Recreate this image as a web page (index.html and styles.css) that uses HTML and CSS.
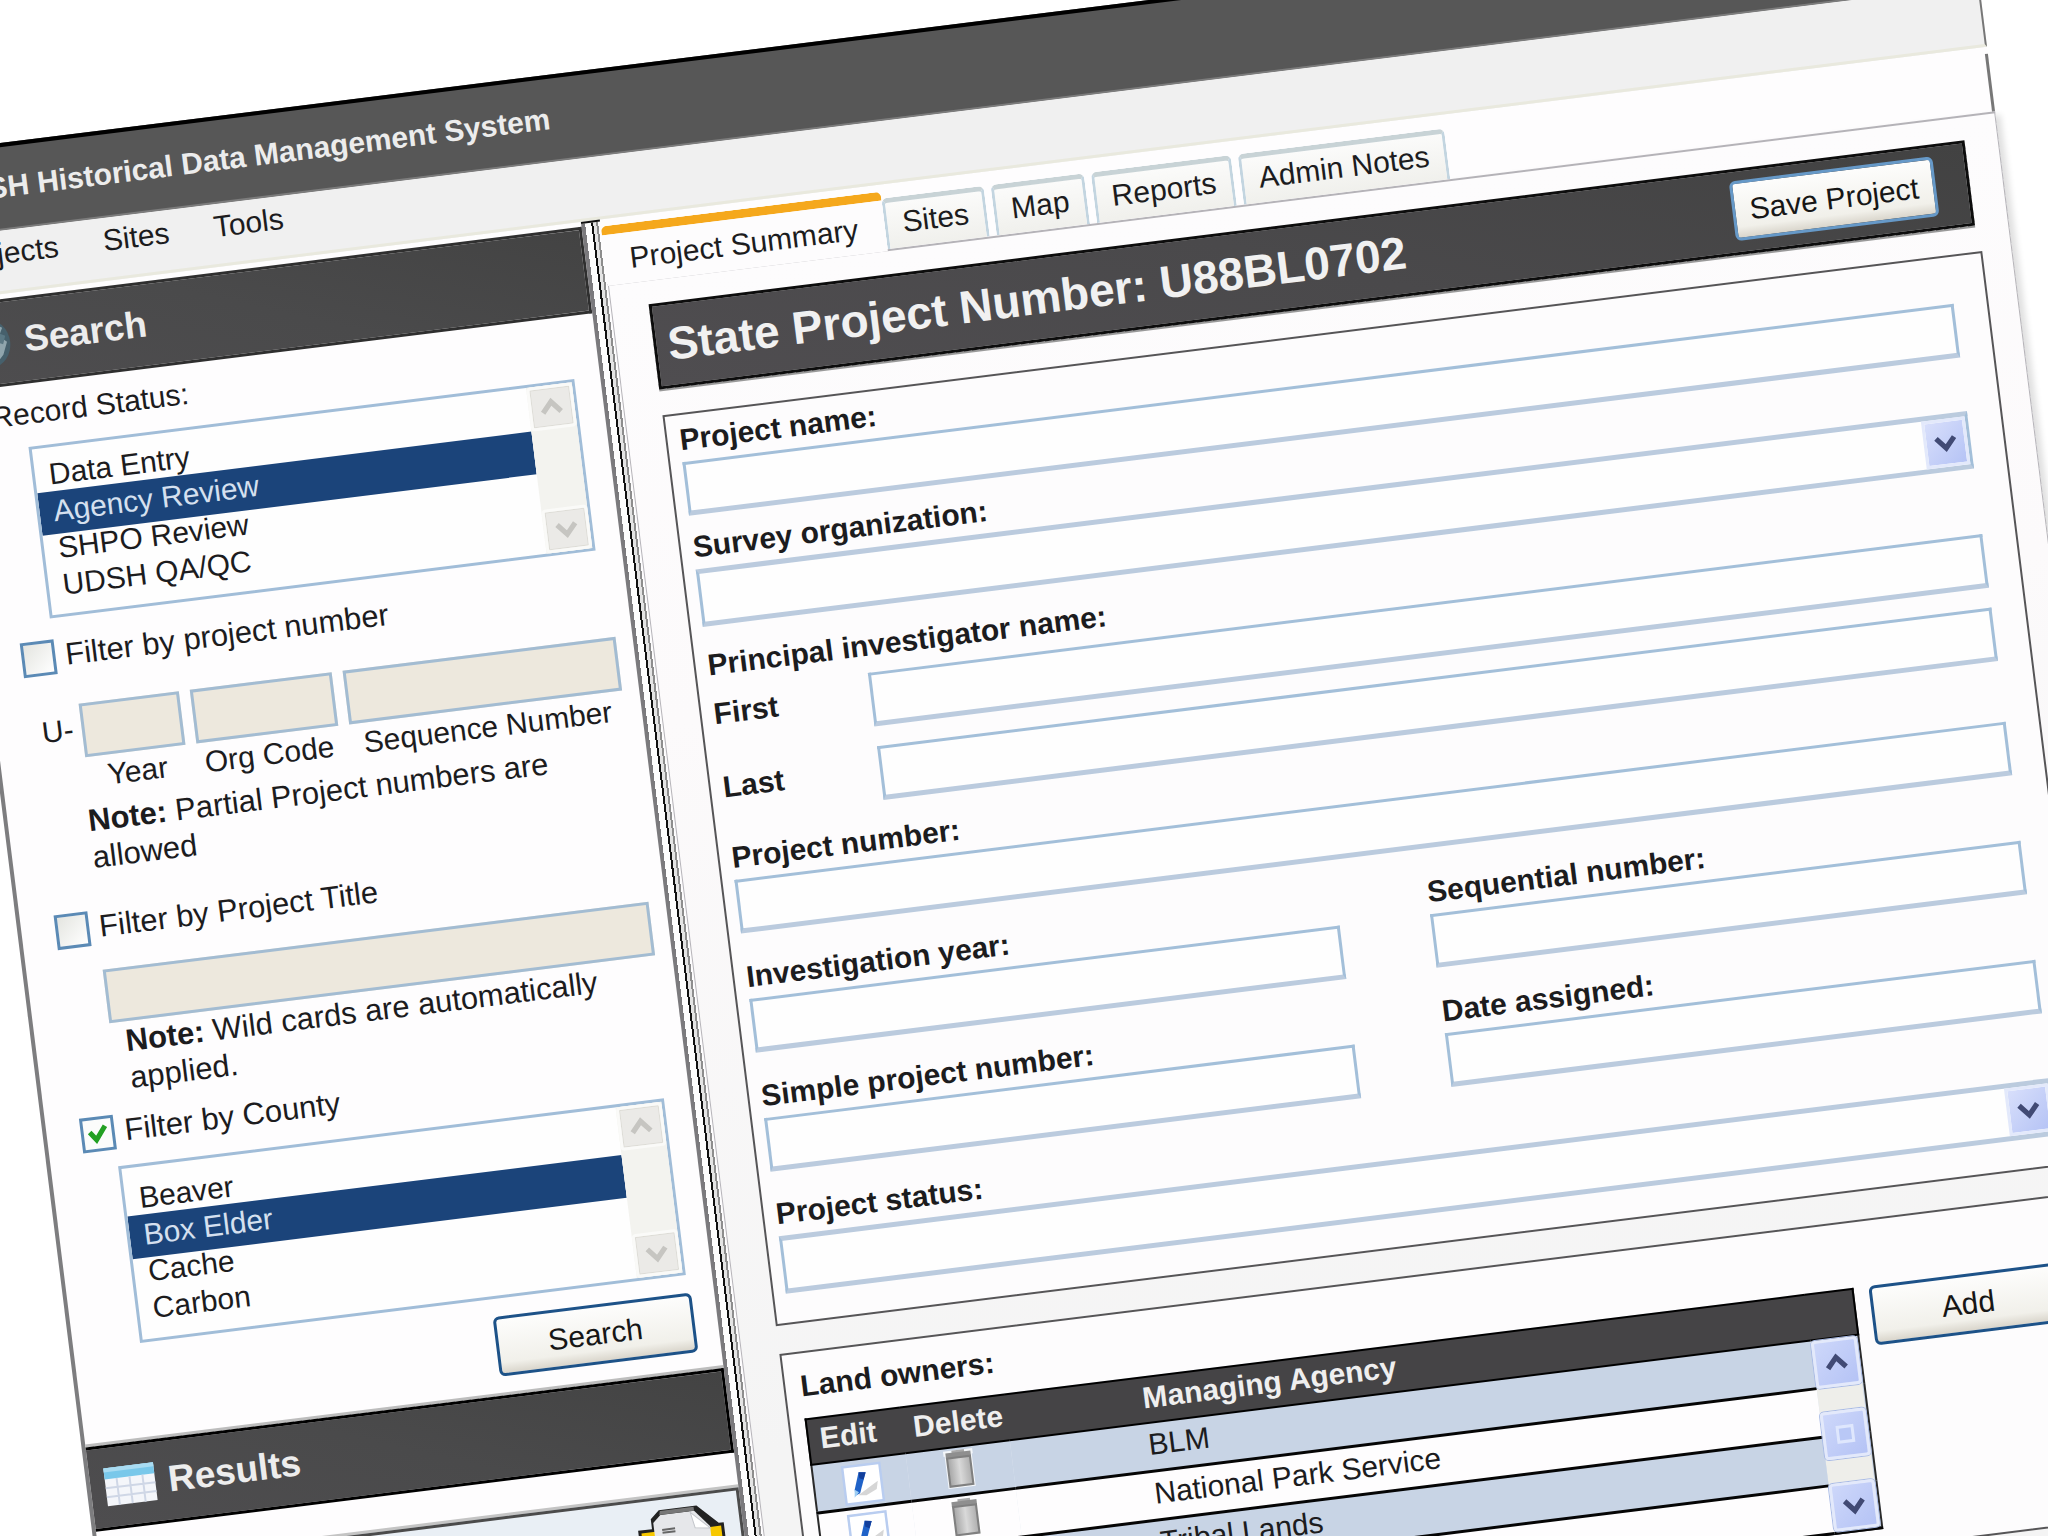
FILE: index.html
```html
<!DOCTYPE html>
<html lang="en">
<head>
<meta charset="utf-8">
<title>UDSH Historical Data Management System</title>
<link rel="stylesheet" href="styles.css">
</head>
<body>
<svg class="defs" aria-hidden="true">
  <symbol id="up" viewBox="0 0 20 20"><path d="M3 14 L10 6 L17 14" fill="none" stroke="currentColor" stroke-width="4"/></symbol>
  <symbol id="down" viewBox="0 0 20 20"><path d="M3 6 L10 14 L17 6" fill="none" stroke="currentColor" stroke-width="4"/></symbol>
  <linearGradient id="steel" x1="0" x2="1" y1="0" y2="0"><stop offset="0" stop-color="#a4a4a4"/><stop offset=".5" stop-color="#d9d9d9"/><stop offset="1" stop-color="#adadad"/></linearGradient>
  <symbol id="trash" viewBox="0 0 34 40"><path d="M3 2h28v5h-1v31H4V7H3z" fill="#fff" opacity=".8"/><path d="M11 2h12v3H11z" fill="#a9a9a9"/><path d="M5 4h24v5H5z" fill="#8f8f8f"/><path d="M6 9h22v27H6z" fill="url(#steel)" stroke="#808080" stroke-width="2"/></symbol>
  <symbol id="pencil" viewBox="0 0 40 40"><path d="M1 1h38v38H1z" fill="#fff" stroke="#b9cdf0" stroke-width="3"/><path d="M14 31 L35 19 L33 27 L22 32z" fill="#d6d6d6"/><path d="M17 8 L24 9 L16 29 L11 31 L11 25z" fill="#1f62c8"/><path d="M17 8 L24 9 L21 16 L17 14z" fill="#123f9c"/><path d="M11 25 L15 28 L10 33z" fill="#9ccdf3"/></symbol>
</svg>
<div class="window">
  <header class="titlebar">UDSH Historical Data Management System</header>
  <nav class="menubar">
    <a href="#projects">Projects</a>
    <a href="#sites">Sites</a>
    <a href="#tools">Tools</a>
  </nav>
  <div class="workspace">
    <aside class="sidebar">
      <h2 class="section-head">
        <svg class="globe" viewBox="0 0 44 48" aria-hidden="true"><ellipse cx="22" cy="24" rx="20" ry="23" fill="#46606c"/><path d="M24 3 l12 7 -4 8 7 6 -5 12 -8 8 -3 -12 -8 -6 4 -10z" fill="#8fa5ad"/><path d="M30 14l8 4-3 8-6-3z" fill="#5b7884"/></svg>
        Search
      </h2>
      <form class="search-form">
        <label for="status">Record Status:</label>
        <div class="listbox">
          <select id="status" size="4">
            <option>Data Entry</option>
            <option selected>Agency Review</option>
            <option>SHPO Review</option>
            <option>UDSH QA/QC</option>
          </select>
          <div class="scroll"><span><svg><use href="#up"/></svg></span><span><svg><use href="#down"/></svg></span></div>
        </div>
        <label class="check check-first"><input type="checkbox">Filter by project number</label>
        <div class="number-row">
          <span class="prefix">U-</span>
          <label class="part part-year"><input type="text" disabled>Year</label>
          <label class="part part-org"><input type="text" disabled>Org Code</label>
          <label class="part part-seq"><input type="text" disabled>Sequence Number</label>
        </div>
        <p class="note"><b>Note:</b> Partial Project numbers are allowed</p>
        <label class="check check-title"><input type="checkbox">Filter by Project Title</label>
        <input class="title-filter" type="text" aria-label="Project title" disabled>
        <p class="note note-title"><b>Note:</b> Wild cards are automatically applied.</p>
        <label class="check check-county"><input type="checkbox" checked>Filter by County</label>
        <div class="listbox listbox-tall">
          <select size="4" aria-label="County">
            <option>Beaver</option>
            <option selected>Box Elder</option>
            <option>Cache</option>
            <option>Carbon</option>
          </select>
          <div class="scroll"><span><svg><use href="#up"/></svg></span><span><svg><use href="#down"/></svg></span></div>
        </div>
        <button class="btn search-btn" type="button">Search</button>
      </form>
      <h2 class="section-head results-head">
        <svg class="grid-icon" viewBox="0 0 52 40" aria-hidden="true"><path d="M1 1h50v38H1z" fill="#f4f6fa"/><path d="M1 1h50v11H1z" fill="#79c8ea"/><path d="M1 1h50v4H1z" fill="#a9dcf2"/><path d="M13 12v27M26 12v27M39 12v27M1 21h50M1 30h50" stroke="#cfd7e6" stroke-width="2"/></svg>
        Results
      </h2>
      <div class="results-panel">
        <svg class="folder" viewBox="0 0 90 70" aria-hidden="true"><path d="M2 20h14V10l9-8h38l20 20h5v48H2z" fill="#222"/><path d="M5 23h14v47H5zM72 25h13v45H72z" fill="#f7c800"/><path d="M18 14l8-7h34l14 17v46H18z" fill="#e6e7ea"/><path d="M26 3h34v4H25z" fill="#777"/><path d="M56 8l3 16 15 2z" fill="#fff" stroke="#c3c5ca"/><path d="M26 22h13M26 25h13" stroke="#666" stroke-width="2"/></svg>
      </div>
    </aside>
    <div class="splitter"></div>
    <main class="detail">
      <nav class="tabs">
        <a class="tab tab-active" href="#summary">Project Summary</a>
        <a class="tab" href="#tab-sites">Sites</a>
        <a class="tab" href="#map">Map</a>
        <a class="tab" href="#reports">Reports</a>
        <a class="tab" href="#notes">Admin Notes</a>
      </nav>
      <div class="panel">
        <div class="project-bar">
          <h1>State Project Number: U88BL0702</h1>
          <button class="btn save-btn" type="button">Save Project</button>
        </div>
        <form class="group">
          <label for="pname">Project name:</label>
          <input id="pname" type="text">
          <label class="near" for="org">Survey organization:</label>
          <div class="combo"><select id="org"></select><span><svg><use href="#down"/></svg></span></div>
          <p class="legend">Principal investigator name:</p>
          <div class="names">
            <label for="first">First</label><input id="first" type="text">
            <label for="last">Last</label><input id="last" type="text">
          </div>
          <label class="after-names" for="pnum">Project number:</label>
          <input id="pnum" type="text">
          <div class="pair">
            <div><label for="year">Investigation year:</label><input id="year" type="text"></div>
            <div><label for="seq">Sequential number:</label><input id="seq" type="text"></div>
            <div><label for="simple">Simple project number:</label><input id="simple" type="text"></div>
            <div><label for="date">Date assigned:</label><input id="date" type="text"></div>
          </div>
          <label for="pstatus">Project status:</label>
          <div class="combo"><select id="pstatus"></select><span><svg><use href="#down"/></svg></span></div>
        </form>
        <section class="group owners">
          <h3>Land owners:</h3>
          <div class="owners-body">
            <table>
              <thead><tr><th class="c-edit">Edit</th><th class="c-delete">Delete</th><th class="c-agency">Managing Agency</th><th class="c-scroll"></th></tr></thead>
              <tbody>
                <tr><td class="c-edit"><svg class="pencil"><use href="#pencil"/></svg></td><td class="c-delete"><svg class="trash"><use href="#trash"/></svg></td><td class="c-agency">BLM</td>
                  <td class="c-scroll" rowspan="4"><div class="scroll scroll-blue"><span><svg><use href="#up"/></svg></span><span><i></i></span><span><svg><use href="#down"/></svg></span></div></td></tr>
                <tr><td class="c-edit"><svg class="pencil"><use href="#pencil"/></svg></td><td class="c-delete"><svg class="trash"><use href="#trash"/></svg></td><td class="c-agency">National Park Service</td></tr>
                <tr><td class="c-edit"><svg class="pencil"><use href="#pencil"/></svg></td><td class="c-delete"><svg class="trash"><use href="#trash"/></svg></td><td class="c-agency">Tribal Lands</td></tr>
                <tr><td class="c-edit"></td><td class="c-delete"></td><td class="c-agency"></td></tr>
              </tbody>
            </table>
            <button class="btn add-btn" type="button">Add</button>
          </div>
        </section>
      </div>
    </main>
  </div>
</div>
</body>
</html>
```
FILE: styles.css
```css
* { box-sizing: border-box; }
html, body { margin: 0; height: 100%; overflow: hidden; background: #fff; }
body { font: 30px/36px "Liberation Sans", Arial, sans-serif; color: #1c1c1e; }
a { color: inherit; text-decoration: none; }
h1, h2, h3, p { margin: 0; }
.defs { position: absolute; width: 0; height: 0; }

/* The whole application window is tilted around the viewport's corner. */
.window {
  width: calc(100vw + 16px);
  margin: 142px 0 0 -98px;
  transform-origin: 98px -142px;
  transform: rotate(-7.1deg);
  background: #fefdfe;
}

.titlebar {
  height: 87px;
  padding: 0 19px;
  border-top: 4px solid #000;
  border-bottom: 2px solid #7c7c7c;
  background: #575757;
  color: #ececec;
  font-size: 30px;
  font-weight: bold;
  line-height: 80px;
}
.menubar {
  display: flex;
  gap: 45px;
  height: 63px;
  padding: 5px 17px;
  background: #f0f0f0;
  border-right: 2px solid #777;
  border-bottom: 3px solid #e9e9de;
}
.workspace { display: flex; align-items: stretch; }

/* ---------- sidebar ---------- */
.sidebar { width: 647px; padding-top: 5px; border-left: 4px solid #7d7d7f; }
.section-head {
  display: flex;
  align-items: center;
  gap: 12px;
  height: 87px;
  padding: 0 0 2px 18px;
  border: 3px solid #2f2f2f;
  border-left: 0;
  background: linear-gradient(20deg, #4e4d4f, #4a4a4b 50%, #434343);
  color: #ededed;
  font-size: 37px;
}
.globe { width: 46px; height: 50px; }
.results-head { height: 85px; margin-top: 19px; padding-left: 14px; border-color: #000; box-shadow: 0 -3px 0 #bdbdbd; }
.grid-icon { width: 52px; height: 40px; }
.search-form { display: flex; flex-direction: column; padding: 12px 23px 0 34px; }
.listbox {
  display: flex;
  height: 173px;
  margin: 15px 3px 0 33px;
  padding-top: 10px;
  border: 3px solid #a1bdd8;
  background: #fefefe;
}
.listbox-tall { height: 178px; margin-top: 17px; padding-top: 14px; }
.listbox select {
  flex: 1;
  min-width: 0;
  padding: 0;
  border: 0;
  outline: 0;
  background: none;
  overflow: hidden;
  color: #1c1c1e;
  font: inherit;
}
.listbox option { height: 37px; min-height: 37px; padding: 0 0 0 14px; line-height: 37px; }
.listbox option:checked {
  height: 43px;
  margin: -3px 0;
  padding-top: 3px;
  background: linear-gradient(#1b447a, #1b447a);
  -webkit-text-fill-color: #d5e0ef;
}
.scroll {
  display: flex;
  flex-direction: column;
  justify-content: space-between;
  width: 46px;
  margin-top: -10px;
  background: #f3f3ef;
  color: #c6c5c1;
}
.listbox-tall .scroll { margin-top: -14px; }
.scroll span {
  display: flex;
  align-items: center;
  justify-content: center;
  height: 44px;
  border: 3px solid #fafaf8;
  border-radius: 4px;
  background: #ebeae7;
  box-shadow: inset 0 0 0 1px #dddcd6;
}
.scroll svg, .combo svg { width: 26px; height: 26px; }

.check { display: flex; align-items: center; gap: 10px; height: 36px; font-size: 31px; }
.check input {
  appearance: none;
  width: 34px;
  height: 35px;
  margin: 0;
  border: 3px solid #5b8ab5;
  background: linear-gradient(135deg, #e4e5e0, #fff);
}
.check input:checked {
  background: #fbfcfb url("data:image/svg+xml,%3Csvg xmlns='http://www.w3.org/2000/svg' viewBox='0 0 28 28'%3E%3Cpath d='M6 12l6 8L22 7' fill='none' stroke='%2322a022' stroke-width='5'/%3E%3C/svg%3E") center / 28px 28px no-repeat;
}
.check-first { margin-top: 20px; }
.check-title { margin-top: 33px; }
.check-county { margin-top: 15px; }

.number-row { display: flex; gap: 11px; margin: 32px -6px 0 11px; }
.prefix { width: 29px; padding-top: 7px; }
.part { display: flex; flex-direction: column; align-items: center; line-height: 40px; }
.part input { width: 100%; }
.part-year { width: 101px; }
.part-org { width: 143px; }
.part-seq { width: 276px; }
.part input, .title-filter {
  height: 54px;
  margin: 0;
  border: 3px solid #a3bcd2;
  background: #ede8dd;
}
.note { margin: 5px 0 0 46px; font-size: 31px; line-height: 37px; }
.title-filter { margin: 25px -6px 0 42px; }
.note-title { margin: 1px 40px 0 56px; }

.btn {
  padding: 0;
  border: 3px solid #1d5288;
  border-radius: 6px;
  background: linear-gradient(#fdfdfc, #f1f0ea 80%, #d9d5cb);
  color: #161616;
  font: inherit;
}
.search-btn { align-self: flex-end; width: 200px; height: 60px; margin-top: 18px; }
.results-panel {
  display: flex;
  justify-content: flex-end;
  height: 110px;
  margin-top: 35px;
  padding: 8px 14px;
  border: 3px solid #4b4b4b;
  background: #e9eff5;
  box-shadow: 0 -3px 0 #c4c4c4;
}
.folder { width: 90px; height: 70px; }

.splitter {
  width: 19px;
  background: linear-gradient(90deg, #7b7a7d 0 4px, #fdfdfd 4px 10px, #111 10px 12px, #e4e4e4 12px 15px, #8d8d8d 15px 17px, #fefdfe 17px);
  border-top: 2px solid #111;
}

/* ---------- detail pane ---------- */
.detail { flex: 1; min-width: 0; padding-top: 7px; }
.tabs { display: flex; align-items: flex-end; border-right: 3px solid #777; }
.tab {
  height: 51px;
  margin-left: 7px;
  padding: 3px 15px 0;
  border: 3px solid #c3d5e0;
  border-top: 5px solid #c8d3d6;
  border-bottom: 0;
  border-radius: 6px 6px 0 0;
  background: linear-gradient(#fbfbfa, #f0f0ec);
}
.tab-active {
  position: relative;
  height: 60px;
  margin: 0 -7px -2px 0;
  padding: 8px 27px 0 25px;
  border: 0;
  border-top: 9px solid #f5a81c;
  background: #fdfcfd;
}
.panel {
  padding: 23px 33px 60px 37px;
  border: 2px solid #b5b3b8;
  border-width: 2px 1px 0;
  background: linear-gradient(#fdfcfd, #fcfafb 30%, #f4f4f4 80%);
  box-shadow: 5px 4px 6px #e0e0e0;
}
.project-bar {
  display: flex;
  align-items: center;
  justify-content: space-between;
  height: 86px;
  padding: 0 31px 3px 11px;
  border: 3px solid #0d0d0d;
  background: linear-gradient(20deg, #4f4d50, #4a494b 50%, #424242);
  box-shadow: 0 2px 0 #999;
}
.project-bar h1 { color: #f1f1f1; font-size: 46px; line-height: 56px; }
.save-btn { width: 205px; height: 60px; border-color: #6699c8; }

.group {
  display: flex;
  flex-direction: column;
  margin: 26px -4px 0 0;
  padding: 7px 33px 29px 12px;
  border: 2px solid #565557;
  background: #fdfcfd;
}
.group label, .legend, .owners h3 { font-size: 30px; font-weight: bold; line-height: 36px; }
.group label { display: block; margin-bottom: 4px; }
.group .near { margin-top: 14px; }
.legend { margin: 21px 0 9px; }
.group input, .combo select {
  display: block;
  width: 100%;
  height: 54px;
  margin: 0;
  border: 3px solid #a3bfd9;
  border-bottom: 5px solid #bbcbde;
  border-radius: 0;
  background: #fefefe;
}
.combo { position: relative; }
.combo select { appearance: none; height: 58px; border-top: 5px solid #bbcbde; }
.combo span {
  position: absolute;
  top: 5px;
  right: 3px;
  bottom: 5px;
  display: flex;
  align-items: center;
  justify-content: center;
  width: 44px;
  border: 3px solid #e3e9fb;
  background: linear-gradient(135deg, #d8dffb, #b5c3f5);
  color: #414a74;
  pointer-events: none;
}
.names { display: grid; grid-template-columns: 158px 1fr; row-gap: 20px; align-items: center; }
.names label { margin: 0 0 10px; }
.group .after-names { margin-top: 21px; }
.pair { display: grid; grid-template-columns: 1fr 1fr; gap: 26px 91px; margin: 26px 0 25px; }

.owners { margin-top: 28px; padding: 15px 45px 18px 15px; }
.owners h3 { margin-bottom: 14px; }
.owners-body { display: flex; align-items: flex-start; gap: 15px; }
table {
  flex: 1;
  border-collapse: collapse;
  table-layout: fixed;
  border: 2px solid #2a2a2a;
  background: linear-gradient(#454446 46px, #e2e8f1 46px);
}
th {
  height: 46px;
  padding: 0 0 4px 11px;
  text-align: left;
  line-height: 36px;
  color: #efefef;
}
thead { border: 2px solid #000; }
td { height: 48px; padding: 0 0 4px 11px; border-bottom: 3px solid #050505; line-height: 36px; }
tbody tr:nth-child(odd) { background: #c8d4e5; }
tbody tr:nth-child(even) { background: #fefdfe; }
.c-edit { width: 95px; }
.c-delete { width: 105px; }
.c-agency { padding-left: 137px; }
.c-scroll { width: 48px; padding: 0; }
td.c-edit { padding: 2px 0 0 28px; }
td.c-delete { padding: 0 0 4px 34px; }
.pencil, .trash { display: block; width: 40px; height: 40px; }
.trash { width: 36px; height: 42px; }
.scroll-blue { width: 46px; height: 192px; margin: 0; color: #414a74; background: #eeeeea; }
.scroll-blue span { height: 48px; border-color: #e3e9fb; background: linear-gradient(135deg, #cdd7fa, #b5c3f5); box-shadow: 0 0 0 1px #a9bbe6; }
.scroll-blue i { width: 18px; height: 18px; border: 3px solid #dfe7fd; background: #b9c8f6; }
.add-btn { width: 194px; height: 60px; }
```
